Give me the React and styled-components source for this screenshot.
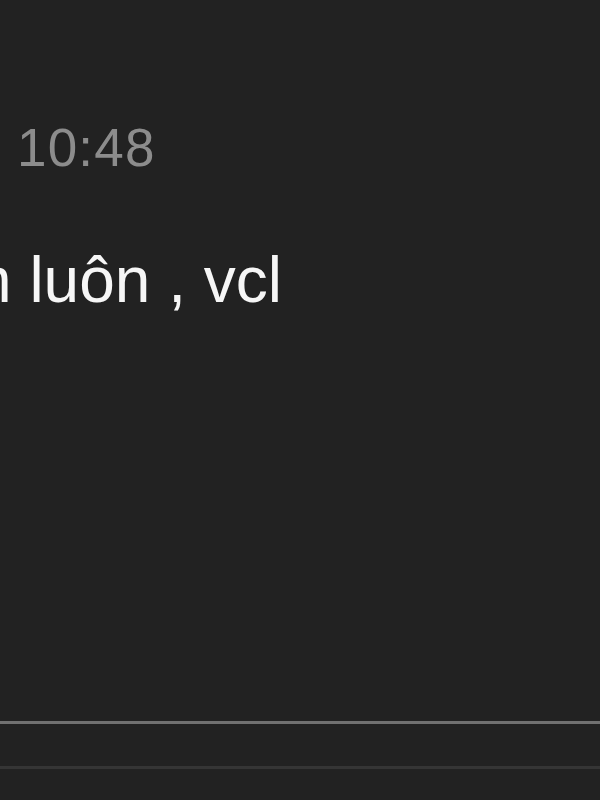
import styled, { createGlobalStyle } from 'styled-components'

const GlobalStyle = createGlobalStyle`
  html, body {
    margin: 0;
    padding: 0;
    background: #222222;
  }
  #root {
    height: 100vh;
  }
`

const Screen = styled.div`
  display: flex;
  flex-direction: column;
  height: 800px;
  width: 600px;
  overflow: hidden;
  background: #222222;
  font-family: "Liberation Sans", Arial, "Helvetica Neue", sans-serif;
`

const Thread = styled.div`
  flex: 1;
  display: flex;
  flex-direction: column;
  padding-top: 121px;
`

const Time = styled.div`
  font-size: 53px;
  line-height: 1;
  letter-spacing: 1.2px;
  color: #8c8c8c;
  padding-left: 17px;
`

// message bubble scrolled partly past the left edge
const Message = styled.div`
  margin-top: 74px;
  margin-left: -24px;
  font-size: 64px;
  line-height: 1;
  color: #f6f6f6;
  white-space: nowrap;
`

const Divider = styled.div`
  height: 3px;
  flex-shrink: 0;
  background: ${props => props.$strong ? '#717171' : '#353535'};
`

const Composer = styled.div`
  height: 42px;
  flex-shrink: 0;
  background: #222222;
`

const Tail = styled.div`
  height: 31px;
  flex-shrink: 0;
  background: #222222;
`

export default function App() {
  return (
    <>
      <GlobalStyle />
      <Screen>
        <Thread>
          <Time>10:48</Time>
          <Message>n luôn , vcl</Message>
        </Thread>
        <Divider $strong />
        <Composer />
        <Divider />
        <Tail />
      </Screen>
    </>
  )
}
